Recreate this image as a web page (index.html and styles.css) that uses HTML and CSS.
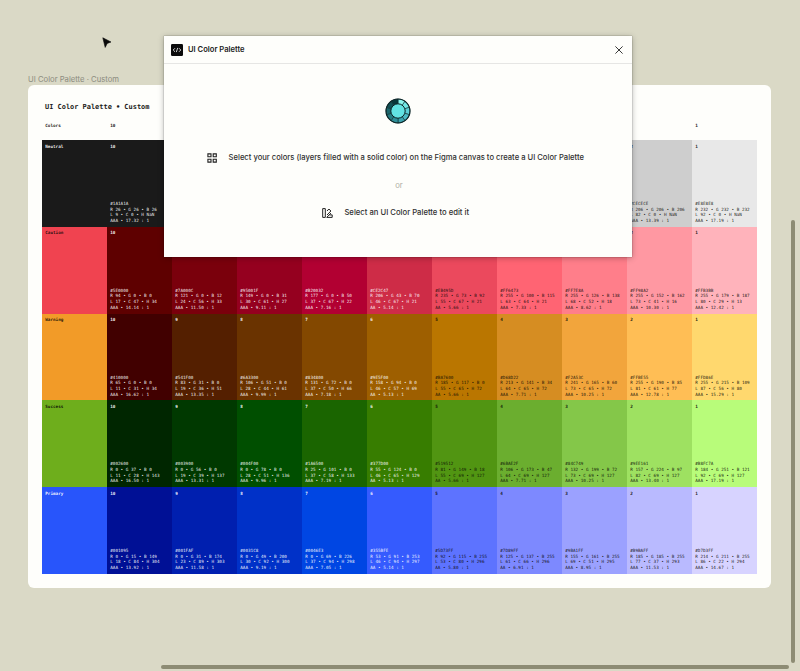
FILE: index.html
```
<!DOCTYPE html>
<html lang="en">
<head>
<meta charset="utf-8">
<title>UI Color Palette</title>
<link rel="stylesheet" href="styles.css">
</head>
<body>
<main class="canvas">
  <div class="frame-label">UI Color Palette · Custom</div>
  <section class="board">
    <h1 class="board-title">UI Color Palette • Custom</h1>
    <div class="row head" id="head"></div>
    <div id="rows"></div>
  </section>
  <section class="dialog">
    <header class="dialog-bar">
      <svg class="badge" viewBox="0 0 12 12"><rect width="12" height="12" rx="1.2" fill="#0b0b0b"/><path d="M4 4.2 2.2 6 4 7.8M8 4.2 9.8 6 8 7.8M6.7 3.9 5.3 8.1" fill="none" stroke="#fff" stroke-width=".8"/></svg>
      <span class="dialog-title">UI Color Palette</span>
      <svg class="close" viewBox="0 0 8 8"><path d="M.4.4 7.6 7.6M7.6.4.4 7.6" stroke="#222" stroke-width=".9"/></svg>
    </header>
    <div class="dialog-body">
      <svg class="wheel" viewBox="0 0 26 26" id="wheel"></svg>
      <div class="hint">
        <svg class="icon" viewBox="0 0 10 10"><path d="M.9.9h3.1v2.9H.9zM6.2.9h3.1v2.9H6.2zM.9 6.2h3.1v2.9H.9zM6.2 6.2h3.1v2.9H6.2z" fill="none" stroke="#222" stroke-width="1.1"/></svg>
        <span class="hint-a">Select your colors (layers filled with a solid color) on the Figma canvas to create a UI Color Palette</span>
      </div>
      <div class="or">or</div>
      <div class="hint">
        <svg class="icon wide" viewBox="0 0 11 10"><path d="M.7.6h2.6v8.8H.7zM5 3 6.9 1l2 2L5 7M7.4 6.9h2.8v2.5H4.7L9 5.1" fill="none" stroke="#222" stroke-width="1"/></svg>
        <span class="hint-b">Select an UI Color Palette to edit it</span>
      </div>
    </div>
  </section>
  <svg class="cursor" viewBox="0 0 10 12"><path d="M.8.8 9 5 5.2 6.4 3.2 10.4z" fill="#0a0a0a" stroke="#0a0a0a" stroke-width=".6"/></svg>
  <div class="scroll-v"></div>
  <div class="scroll-h"></div>
</main>
<script src="palette.js"></script>
</body>
</html>
```
FILE: styles.css
```
* { box-sizing: border-box; }
body { margin: 0; font-family: Inter, "Liberation Sans", sans-serif; }
.canvas {
  position: relative;
  width: 800px;
  height: 671px;
  padding: 74px 29px 0 28px;
  overflow: hidden;
  background: #dad9c6;
}
.frame-label { height: 11px; line-height: 11px; font-size: 7.7px; color: #8c8c80; white-space: nowrap; }
.board {
  height: 503px;
  padding: 17px 14px 14px;
  border-radius: 6px;
  background: #fefefb;
  font-family: "DejaVu Sans Mono", "Liberation Mono", monospace;
}
.board-title { margin: 0 0 0 3px; height: 10px; line-height: 10px; font-size: 6.95px; font-weight: 700; color: #1c1c1a; white-space: nowrap; }
.row { display: grid; grid-template-columns: repeat(11, 65px); height: 86.8px; }
.head { height: 28px; padding-top: 8px; color: #1c1c1a; }
.cell {
  display: flex;
  flex-direction: column;
  justify-content: space-between;
  padding: 3.5px 0 3.2px 3.2px;
  font-size: 4.32px;
  line-height: 5.65px;
  white-space: pre;
}
.head .cell { padding-top: 2.5px; }
.head .cell, .name { font-weight: 700; }
.light { color: rgba(255, 255, 255, .92); }
.dark { color: rgba(10, 8, 4, .9); }

.dialog {
  position: absolute;
  left: 164px;
  top: 36px;
  width: 468px;
  height: 220.5px;
  background: #fefefb;
  box-shadow: 0 1px 6px rgba(0, 0, 0, .28), 0 0 1px rgba(0, 0, 0, .5);
}
.dialog-bar { display: flex; align-items: center; height: 28px; padding: 0 9px 0 7px; border-bottom: 1px solid #e6e6e4; }
.badge { width: 12px; height: 12px; }
.dialog-title { margin-left: 5px; flex: 1; font-size: 7.6px; font-weight: 600; color: #222; }
.close { width: 8px; height: 8px; }
.dialog-body { display: flex; flex-direction: column; align-items: center; padding-top: 34px; color: #303030; }
.wheel { width: 26px; height: 26px; margin-bottom: 27.5px; }
.hint { display: flex; align-items: center; gap: 11.5px; height: 12px; padding-right: 5px; font-size: 7.63px; font-weight: 500; line-height: 12px; white-space: nowrap; }
.icon { width: 10px; height: 10px; }
.icon.wide { width: 11px; }
.hint-b { font-size: 7.7px; }
.or { height: 43.5px; line-height: 43px; padding-left: 2px; font-size: 7.7px; color: #b0b0a4; }

.cursor { position: absolute; left: 102px; top: 37px; width: 10px; height: 12px; }
.scroll-v, .scroll-h { position: absolute; border-radius: 2px; background: #8d8c74; }
.scroll-v { left: 791px; top: 220px; width: 4px; height: 443px; }
.scroll-h { left: 161px; top: 665px; width: 628px; height: 4px; }
```
FILE: palette.js
```
// name, base colour, base label tone, then [hex, rgb, lch, contrast] from 10 to 1;
// an entry with only a hex is drawn as a plain swatch
const scales = [
  ["Neutral", "#1a1a1a", "light", [
    ["#1A1A1A", "26 26 26", "9 0 NaN", "17.32"], ["#2A2A2A"], ["#3B3B3B"], ["#4D4D4D"],
    ["#606060"], ["#757575"], ["#8A8A8A"], ["#A0A0A0"],
    ["#CECECE", "206 206 206", "82 0 NaN", "13.39"], ["#E8E8E8", "232 232 232", "92 0 NaN", "17.19"]]],
  ["Caution", "#f04350", "dark", [
    ["#5E0000", "94 0 0", "17 47 34", "14.14"], ["#7A000C", "121 0 12", "24 56 33", "11.50"],
    ["#95001F", "149 0 31", "30 61 27", "9.11"], ["#B20032", "177 0 50", "37 67 22", "7.16"],
    ["#CE2C47", "206 43 70", "46 67 21", "5.14"], ["#EB495D", "235 73 92", "55 67 21", "5.66"],
    ["#FF6473", "255 100 115", "63 64 21", "7.33"], ["#FF7E8A", "255 126 138", "68 52 18", "8.62"],
    ["#FF98A2", "255 152 162", "73 41 16", "10.30"], ["#FFB3BB", "255 179 187", "80 29 13", "12.42"]]],
  ["Warning", "#f29b28", "dark", [
    ["#410000", "65 0 0", "11 31 34", "16.62"], ["#541F00", "83 31 0", "19 36 51", "13.35"],
    ["#6A3300", "106 51 0", "28 44 61", "9.99"], ["#834800", "131 72 0", "37 50 66", "7.18"],
    ["#9E5F00", "158 94 0", "46 57 69", "5.13"], ["#BA7600", "185 117 0", "55 65 72", "5.66"],
    ["#D68D22", "213 141 34", "64 65 72", "7.71"], ["#F2A53C", "241 165 60", "73 65 72", "10.25"],
    ["#FFBE55", "255 190 85", "81 61 77", "12.78"], ["#FFD86E", "255 215 109", "87 56 80", "15.29"]]],
  ["Success", "#6eae1c", "dark", [
    ["#002600", "0 37 0", "11 28 143", "16.50"], ["#003900", "0 56 0", "19 39 137", "13.31"],
    ["#004F00", "0 78 0", "28 51 136", "9.96"], ["#1A6500", "25 101 0", "37 58 133", "7.19"],
    ["#377D00", "55 124 0", "46 65 129", "5.13"], ["#519512", "81 149 18", "55 69 127", "5.66"],
    ["#6BAE2F", "106 173 47", "64 69 127", "7.71"], ["#84C749", "132 199 72", "73 69 127", "10.25"],
    ["#9EE161", "157 224 97", "82 69 127", "13.40"], ["#B8FC7A", "184 251 121", "92 69 127", "17.19"]]],
  ["Primary", "#2855fb", "light", [
    ["#001095", "0 15 149", "18 84 304", "13.92"], ["#001FAF", "0 31 174", "23 89 303", "11.58"],
    ["#0031C8", "0 49 200", "30 92 300", "9.19"], ["#0046E3", "0 69 226", "37 94 298", "7.05"],
    ["#355BFE", "53 91 253", "46 94 297", "5.14"], ["#5D73FF", "92 115 255", "53 80 296", "5.80"],
    ["#7D89FF", "125 137 255", "61 66 296", "6.91"], ["#9BA1FF", "155 161 255", "69 51 295", "8.95"],
    ["#B9BAFF", "185 185 255", "77 37 293", "11.53"], ["#D7D3FF", "214 211 255", "86 22 294", "14.67"]]]
];

const heads = ["Colors", 10, "", "", "", "", "", "", "", "", 1];
document.getElementById("head").innerHTML = heads.map(h => `<div class="cell">${h}</div>`).join("");

document.getElementById("rows").innerHTML = scales.map(([name, base, tone, shades]) => {
  const cells = shades.map(([hex, rgb, lch, ratio], i) => {
    if (!rgb) return `<div class="cell" style="background:${hex}"></div>`;
    const [r, g, b] = rgb.split(" ");
    const [l, c, h] = lch.split(" ");
    const grade = Number(ratio) >= 7 ? "AAA" : "AA";
    return `<div class="cell ${i < 5 ? "light" : "dark"}" style="background:${hex}"><span class="name">${10 - i}</span>` +
      `<span>${hex}\nR ${r} • G ${g} • B ${b}\nL ${l} • C ${c} • H ${h}\n${grade} • ${ratio} : 1</span></div>`;
  }).join("");
  return `<div class="row"><div class="cell ${tone}" style="background:${base}"><span class="name">${name}</span></div>${cells}</div>`;
}).join("");

// ring of ten tints around a central disc, light to dark clockwise
const tints = ["#8cf5ee", "#70e6e4", "#5ccfd6", "#4ab8c2", "#3ba3ae", "#2f8f98", "#257b82", "#1b666c", "#115054", "#08383b"];
const pt = (a, r) => `${(13 + r * Math.sin(a)).toFixed(2)} ${(13 - r * Math.cos(a)).toFixed(2)}`;
document.getElementById("wheel").innerHTML = tints.map((t, i) => {
  const a = i * Math.PI / 5, b = a + Math.PI / 5;
  return `<path d="M13 13L${pt(a, 12)}A12 12 0 0 1 ${pt(b, 12)}Z" fill="${t}" stroke="#0c3034" stroke-width=".6"/>`;
}).join("") + '<circle cx="13" cy="13" r="12" fill="none" stroke="#0c2426" stroke-width="1.1"/><circle cx="13" cy="13" r="7.2" fill="#62e3e3" stroke="#0c2426" stroke-width="1"/>';
```
